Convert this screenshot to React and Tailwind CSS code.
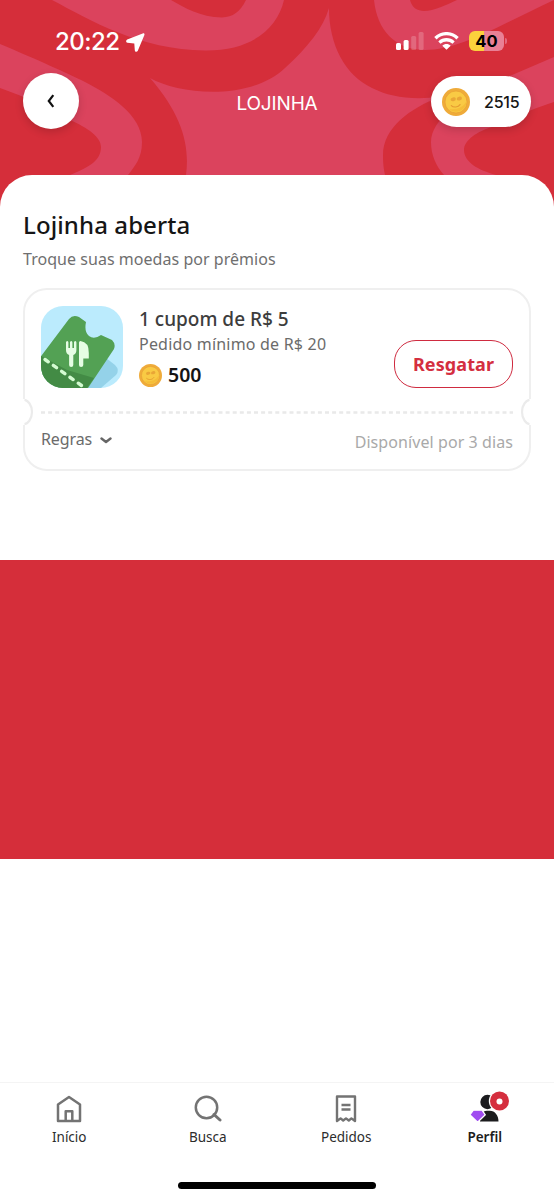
import { useState } from 'react';

const navItems = [
  { id: 'inicio', label: 'Início' },
  { id: 'busca', label: 'Busca' },
  { id: 'pedidos', label: 'Pedidos' },
  { id: 'perfil', label: 'Perfil' },
];

const HeaderPattern = () => (
  <svg className="absolute inset-0" width="554" height="210" viewBox="0 0 554 210" fill="#db435d">
    <path d="M52 0C90 20 140 50 205 50.5C250 51 277 30 284 0H246C240 12 233 17 222 17.5C200 17 185 8 171 0Z" />
    <path d="M0 44C40 61 65 72 85 82C110 95 142 115 142 142C142 158 135 166 128 175H70C90 167 101 160 101 147C101 137 88 128 70 120C50 107 25 97 0 88Z" />
    <path d="M150 78C180 95 250 101 285 68C309 46 323 28 329 8C329 45 345 75 372 88C390 97 410 100 440 97C410 108 383 128 383 155C383 165 384 170 385 175H186C190 145 182 115 150 78Z" />
    <path d="M374 0C377 30 395 50 425 50C460 50 500 25 554 0H457C440 8 415 20 410 0Z" />
    <path d="M554 57L505 78C460 98 431 120 431 142C431 155 436 166 444 175H496C478 170 464 162 464 150C464 140 478 131 492 127C510 118 535 108 554 102Z" />
  </svg>
);

const Coin = ({ size }) => (
  <svg width={size} height={size} viewBox="0 0 28 28" className="shrink-0">
    <circle cx="14" cy="14" r="14" fill="#efab3a" />
    <circle cx="14" cy="14" r="11" fill="#f9ca44" stroke="#e79e34" strokeWidth="0.7" />
    <path d="M7 21A10.5 10.5 0 0 0 24.5 13C22 19 15 22 7 21Z" fill="#f5bd38" />
    <ellipse cx="11.2" cy="11.3" rx="2.7" ry="1.9" fill="#e9a636" transform="rotate(-12 11.2 11.3)" />
    <ellipse cx="17.3" cy="10.6" rx="2.7" ry="1.9" fill="#e9a636" transform="rotate(-12 17.3 10.6)" />
    <path d="M9.3 17.6C11.5 19.8 16.3 19.4 18 16.6" fill="none" stroke="#e59c31" strokeWidth="1.2" strokeLinecap="round" />
  </svg>
);

const StatusBar = () => (
  <div className="flex h-[72px] items-start justify-between pl-[55px] pr-[47px] pt-[27px]">
    <div className="flex items-center gap-[6px]">
      <span className="font-['Inter',sans-serif] text-[24px] font-medium leading-[30px] tracking-[-0.5px] text-white">
        20:22
      </span>
      <svg width="19" height="19" viewBox="0 0 19 19" fill="#fff">
        <path d="M16.7 .4L1.2 6.6C-.3 7.3 -.2 9.4 1.4 9.7L8.3 10.6L8.8 17.2C9 19 11 19.3 11.8 17.7L18.3 2.2C18.9 .8 18 -.1 16.7 .4Z" />
      </svg>
    </div>
    <div className="flex items-center gap-[10px] pt-[4px]">
      <svg width="28" height="18" viewBox="0 0 28 18" fill="#fff">
        <rect x="0" y="11" width="5" height="7" rx="1.5" />
        <rect x="7.6" y="8" width="5" height="10" rx="1.5" />
        <rect x="15.2" y="4" width="5" height="14" rx="1.5" opacity=".2" />
        <rect x="22.6" y="0" width="5" height="18" rx="1.5" opacity=".2" />
      </svg>
      <svg width="25" height="18" viewBox="0 0 25 18" fill="none" stroke="#fff" strokeWidth="3.3">
        <path d="M1.4 6.2C7.6 .1 17.4 .1 23.6 6.2" />
        <path d="M5.4 10.6C9.6 6.8 15.4 6.8 19.6 10.6" />
        <path d="M8.3 13.8C10.6 11.5 14.4 11.5 16.7 13.8L12.5 17.8Z" fill="#fff" stroke="none" />
      </svg>
      <div className="flex items-center gap-px">
        <div className="flex h-5 w-[35px] items-center justify-center rounded-[6px] bg-[linear-gradient(90deg,#fbd13c_43%,#e98095_43%)] font-['Inter',sans-serif] text-[16.5px] font-bold leading-none text-black">
          40
        </div>
        <div className="h-[6px] w-[2px] rounded-r-full bg-[#e4687e]" />
      </div>
    </div>
  </div>
);

const CouponImage = () => (
  <svg width="83" height="83" viewBox="0 0 83 83" className="mt-[16px] shrink-0">
    <defs>
      <clipPath id="tile">
        <rect width="82" height="82" rx="22" />
      </clipPath>
    </defs>
    <g clipPath="url(#tile)">
      <rect width="83" height="83" fill="#bbebfd" />
      <path d="M65 52L74 59Q79 64 75 69L60 82H40Z" fill="#94d2e9" />
      <path d="M-2 53L28 13Q32 8 38 11L45 16Q43 26 48 30Q53 34 60 29L71 34Q75 38 73 43L47 82H-2Z" fill="#53a154" />
      <path d="M0 50L26 64L53 72L46 82H0Z" fill="#438b45" />
      <path d="M4 53.5L44 82" stroke="#d4fbd1" strokeWidth="3.4" strokeLinecap="round" strokeDasharray="4 6.2" />
      <g fill="#e6fde4">
        <path d="M25 36.5Q25 35 26.2 35Q27.4 35 27.4 36.5V42H29V36.5Q29 35 30.2 35Q31.4 35 31.4 36.5V42H33V36.5Q33 35 34.2 35Q35.4 35 35.4 36.5V44Q35.4 48 32.3 49V59Q32.3 61 30.2 61Q28.1 61 28.1 59V49Q25 48 25 44Z" />
        <path d="M38 36.5Q38 35 39.5 35Q48 36 47.8 47V52.5H42.3V59Q42.3 61 40.1 61Q38 61 38 59Z" />
      </g>
    </g>
  </svg>
);

// Half circle that cuts the edge of the ticket
const Notch = ({ side }) => (
  <svg
    width="11"
    height="26"
    viewBox="0 0 11 26"
    className={side === 'left' ? 'absolute -left-[2px] top-[109px]' : 'absolute -right-[2px] top-[109px] rotate-180'}
  >
    <path d="M0 0H2L3 1A12.5 12.5 0 0 1 3 25L2 26H0Z" fill="#fff" />
    <path d="M1.5 .8C4.5 1.2 9 5.5 9 13C9 20.5 4.5 24.8 1.5 25.2" fill="none" stroke="#ebebeb" strokeWidth="2.2" />
  </svg>
);

const CouponCard = () => {
  const [open, setOpen] = useState(false);

  return (
    <div className="relative mt-[17px] h-[183px] rounded-[24px] border-2 border-[#efefef] px-4">
      <Notch side="left" />
      <Notch side="right" />
      <div className="flex h-[121px]">
        <CouponImage />
        <div className="ml-[15px] flex-1 pt-[17px]">
          <h2 className="whitespace-nowrap text-[19px] font-medium leading-[25px] text-[#3d3d3d]">1 cupom de R$ 5</h2>
          <p className="whitespace-nowrap text-[16px] leading-[25px] tracking-[0.2px] text-[#6b6b6b]">
            Pedido mínimo de R$ 20
          </p>
          <div className="mt-[4px] flex items-center gap-[6px]">
            <Coin size={23} />
            <span className="text-[19.5px] font-semibold leading-[28px] text-[#141414]">500</span>
          </div>
        </div>
        <button className="mt-[50px] flex h-12 w-[119px] items-center justify-center rounded-[22px] border-[1.5px] border-[#cf2b40] text-[18px] font-bold tracking-[0.1px] text-[#d42e40]">
          Resgatar
        </button>
      </div>
      <svg width="472" height="3" viewBox="0 0 472 3" className="block">
        <path d="M0 1.5H472" stroke="#e9e9e9" strokeWidth="2.6" strokeDasharray="4 3.1" />
      </svg>
      <div className="flex items-start justify-between">
        <button
          onClick={() => setOpen(!open)}
          className="mt-[12px] flex items-center gap-2 text-[16px] leading-[26px] tracking-[-0.1px] text-[#6b6b6b]"
        >
          Regras
          <svg width="12" height="7" viewBox="0 0 12 7" className="mt-[3px]">
            <path d="M1.5 1.5L6 5L10.5 1.5" fill="none" stroke="#666" strokeWidth="2.4" strokeLinecap="round" strokeLinejoin="round" />
          </svg>
        </button>
        <span className="mt-[15px] text-[16px] leading-[26px] tracking-[0.08px] text-[#a9a9a9]">
          Disponível por 3 dias
        </span>
      </div>
    </div>
  );
};

const NavIcon = ({ id }) => {
  if (id === 'inicio') {
    return (
      <svg width="26" height="28" viewBox="0 0 26 28" fill="none" stroke="#737373" strokeWidth="2.5" strokeLinejoin="round">
        <path d="M2 9.5L13 2L24 9.5V26H2Z" />
        <path d="M9.7 26V16.3H16.3V26" />
      </svg>
    );
  }
  if (id === 'busca') {
    return (
      <svg width="28" height="28" viewBox="0 0 28 28" fill="none" stroke="#737373" strokeWidth="2.5">
        <circle cx="12.5" cy="12.5" r="10.7" />
        <path d="M20 19.5L26 25" strokeWidth="3" strokeLinecap="round" />
      </svg>
    );
  }
  if (id === 'pedidos') {
    return (
      <svg width="22" height="28" viewBox="0 0 22 28" fill="none" stroke="#737373" strokeWidth="2.4" strokeLinejoin="round">
        <path d="M2 1.5H20V26L16.4 23.4L13.8 25.5L11 23.4L8.2 25.5L5.6 23.4L2 26Z" />
        <path d="M6.5 10H15.5M6.5 14.5H15.5" />
      </svg>
    );
  }
  return (
    <svg width="40" height="32" viewBox="0 0 40 32" className="-mt-1 ml-2">
      <circle cx="18.5" cy="11" r="7.2" fill="#1c1c1e" />
      <path d="M11 30.5C11 22.5 14 18.8 19.5 19.8C25.5 19 29.5 24 29.5 30.5Z" fill="#1c1c1e" />
      <path d="M4.4 19.2H13L16.3 23.8L8.6 31.3L.8 23.8Z" fill="#a04df0" stroke="#fff" strokeWidth="1.3" strokeLinejoin="round" />
      <circle cx="30.5" cy="10" r="10.7" fill="#fff" />
      <circle cx="30.5" cy="10" r="9.5" fill="#d52e3e" />
      <circle cx="30.5" cy="10.5" r="3" fill="#fff" />
    </svg>
  );
};

const BottomNav = ({ active, onChange }) => (
  <nav className="h-[118px] border-t-[1.5px] border-[#f4f4f4] bg-white">
    <div className="grid h-[99px] grid-cols-4">
      {navItems.map(item => (
        <button key={item.id} onClick={() => onChange(item.id)} className="flex flex-col items-center pt-[12px]">
          <span className="flex h-[30px] items-start">
            <NavIcon id={item.id} />
          </span>
          <span
            className={
              active === item.id
                ? 'mt-[2px] text-[13.5px] font-semibold leading-[20px] text-[#1c1c1c]'
                : 'mt-[2px] text-[13.5px] leading-[20px] text-[#2c2c2c]'
            }
          >
            {item.label}
          </span>
        </button>
      ))}
    </div>
    <div className="mx-auto h-[7px] w-[198px] rounded-full bg-black" />
  </nav>
);

export default function App() {
  const [activeTab, setActiveTab] = useState('perfil');

  return (
    <div className="flex h-[1200px] w-[554px] flex-col overflow-hidden bg-white font-['Noto_Sans',sans-serif]">
      <div className="relative bg-[#d52e3a]">
        <HeaderPattern />
        <div className="relative">
          <StatusBar />
          <header className="flex h-[103px] items-start justify-between px-[23px]">
            <div className="flex w-[100px]">
              <button className="mt-px flex h-14 w-14 items-center justify-center rounded-full bg-white shadow-[0_3px_8px_rgba(0,0,0,0.16)]">
                <svg width="8" height="14" viewBox="0 0 8 14">
                  <path d="M6.3 1.2L1.8 7L6.3 12.8" fill="none" stroke="#111" strokeWidth="2.2" />
                </svg>
              </button>
            </div>
            <h1 className="mt-[18px] font-['Inter',sans-serif] text-[19px] leading-[28px] tracking-[-0.15px] text-white">
              LOJINHA
            </h1>
            <div className="mt-[4px] flex h-[51px] w-[100px] items-center rounded-full bg-white pl-[11px] shadow-[0_3px_8px_rgba(0,0,0,0.16)]">
              <Coin size={28} />
              <span className="ml-[14px] font-['Inter',sans-serif] text-[16px] font-medium tracking-[-0.2px] text-[#161616]">
                2515
              </span>
            </div>
          </header>
          <main className="h-[385px] rounded-t-[32px] bg-white px-[23px] pt-[33px]">
            <h2 className="text-[24px] font-medium leading-[34px] tracking-[0.1px] text-[#151515]">Lojinha aberta</h2>
            <p className="mt-[6px] text-[16px] leading-[23px] tracking-[0.04px] text-[#6f6f6f]">
              Troque suas moedas por prêmios
            </p>
            <CouponCard />
          </main>
        </div>
      </div>
      <div className="h-[299px] bg-[#d52e3a]" />
      <div className="flex-1 bg-white" />
      <BottomNav active={activeTab} onChange={setActiveTab} />
    </div>
  );
}
